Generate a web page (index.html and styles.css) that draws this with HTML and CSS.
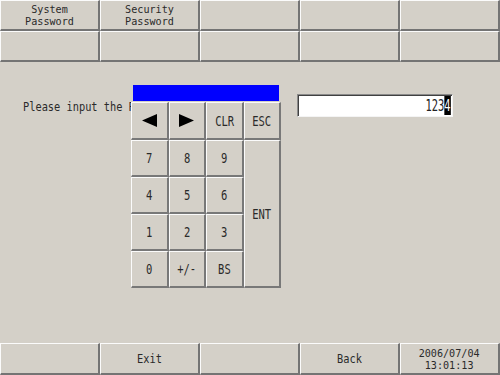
FILE: index.html
```html
<!DOCTYPE html>
<html>
<head>
<meta charset="utf-8">
<link rel="stylesheet" href="styles.css">
</head>
<body>
<div class="screen">
  <div class="tabs">
    <div class="btn"><div class="stack"><span class="line">System</span><span class="line">Password</span></div></div>
    <div class="btn"><div class="stack"><span class="line">Security</span><span class="line">Password</span></div></div>
    <div class="btn"></div>
    <div class="btn"></div>
    <div class="btn"></div>
    <div class="btn"></div>
    <div class="btn"></div>
    <div class="btn"></div>
    <div class="btn"></div>
    <div class="btn"></div>
  </div>
  <div class="main">
    <div class="prompt-row">
      <div class="prompt"><span class="lbl left">Please input the Password.</span></div>
      <div class="field"><span class="val">123<span class="cur">4</span></span></div>
    </div>
    <div class="keypad">
      <div class="title"></div>
      <div class="keys">
        <div class="key"><svg width="15" height="13" viewBox="0 0 15 13"><polygon points="15,0 15,13 0,6.5" fill="#000"/></svg></div>
        <div class="key"><svg width="15" height="13" viewBox="0 0 15 13"><polygon points="0,0 0,13 15,6.5" fill="#000"/></svg></div>
        <div class="key"><span class="klbl">CLR</span></div>
        <div class="key"><span class="klbl">ESC</span></div>
        <div class="key"><span class="klbl">7</span></div>
        <div class="key"><span class="klbl">8</span></div>
        <div class="key"><span class="klbl">9</span></div>
        <div class="key ent"><span class="klbl">ENT</span></div>
        <div class="key"><span class="klbl">4</span></div>
        <div class="key"><span class="klbl">5</span></div>
        <div class="key"><span class="klbl">6</span></div>
        <div class="key"><span class="klbl">1</span></div>
        <div class="key"><span class="klbl">2</span></div>
        <div class="key"><span class="klbl">3</span></div>
        <div class="key"><span class="klbl">0</span></div>
        <div class="key"><span class="klbl">+/-</span></div>
        <div class="key"><span class="klbl">BS</span></div>
      </div>
    </div>
  </div>
  <div class="footer">
    <div class="btn"></div>
    <div class="btn"><span class="lbl">Exit</span></div>
    <div class="btn"></div>
    <div class="btn"><span class="lbl">Back</span></div>
    <div class="btn"><div class="stack"><span class="line">2006/07/04</span><span class="line">13:01:13</span></div></div>
  </div>
</div>
</body>
</html>
```
FILE: styles.css
```css
html, body {
  margin: 0;
  padding: 0;
}
body {
  background: #d4d0c8;
  font-family: "DejaVu Sans Mono", "Liberation Mono", monospace;
  color: #2a2a2a;
}
.screen {
  width: 500px;
  height: 375px;
  display: flex;
  flex-direction: column;
  overflow: hidden;
}
.tabs {
  display: grid;
  grid-template-columns: repeat(5, 100px);
  grid-template-rows: 31px 31px;
}
.footer {
  display: grid;
  grid-template-columns: repeat(5, 100px);
  grid-template-rows: 32px;
}
.btn {
  box-sizing: border-box;
  border-top: 1px solid #fbfbfb;
  border-left: 1px solid #fbfbfb;
  border-right: 2px solid #747474;
  border-bottom: 2px solid #747474;
  display: flex;
  align-items: center;
  justify-content: center;
  text-align: center;
}
.lbl {
  display: inline-block;
  font-size: 12px;
  line-height: 12px;
  transform: scaleX(0.86);
  white-space: nowrap;
}
.lbl.left {
  transform-origin: left center;
}
.stack {
  display: flex;
  flex-direction: column;
  align-items: center;
  transform: scaleX(0.92);
}
.line {
  display: block;
  font-size: 11px;
  line-height: 13px;
  height: 12px;
  white-space: nowrap;
}
.main {
  flex: 1;
  position: relative;
}
.prompt-row {
  display: flex;
  align-items: center;
  margin-top: 32px;
  height: 23px;
}
.prompt {
  flex: 0 0 274px;
  padding-left: 23px;
  white-space: nowrap;
  overflow: hidden;
}
.field {
  box-sizing: border-box;
  width: 156px;
  height: 23px;
  background: #fff;
  border-top: 1px solid #8a8a8a;
  border-left: 1px solid #8a8a8a;
  border-right: 1px solid #f4f4f4;
  border-bottom: 1px solid #f4f4f4;
  box-shadow: inset 1px 1px 0 #404040;
  display: flex;
  align-items: center;
  justify-content: flex-end;
  padding-right: 1px;
}
.val {
  display: inline-block;
  font-size: 16px;
  line-height: 14px;
  color: #222;
  transform: scaleX(0.65);
  transform-origin: right center;
}
.cur {
  background: #000;
  color: #fff;
}
.keypad {
  position: absolute;
  left: 131px;
  top: 22px;
  width: 150px;
  background: #d4d0c8;
}
.title {
  height: 16px;
  margin: 1px 2px 1px;
  background: #0000ff;
}
.keys {
  display: grid;
  grid-template-columns: repeat(4, 37.5px);
  grid-template-rows: 38px 37px 37px 37px 37px;
}
.key {
  box-sizing: border-box;
  background: #d4d0c8;
  border-top: 1px solid #fbfbfb;
  border-left: 1px solid #fbfbfb;
  border-right: 2px solid #787878;
  border-bottom: 2px solid #787878;
  display: flex;
  align-items: center;
  justify-content: center;
}
.key.ent {
  grid-column: 4;
  grid-row: 2 / span 4;
}
.klbl {
  display: inline-block;
  font-size: 14px;
  line-height: 12px;
  transform: scaleX(0.75);
  color: #2a2a2a;
}
```
